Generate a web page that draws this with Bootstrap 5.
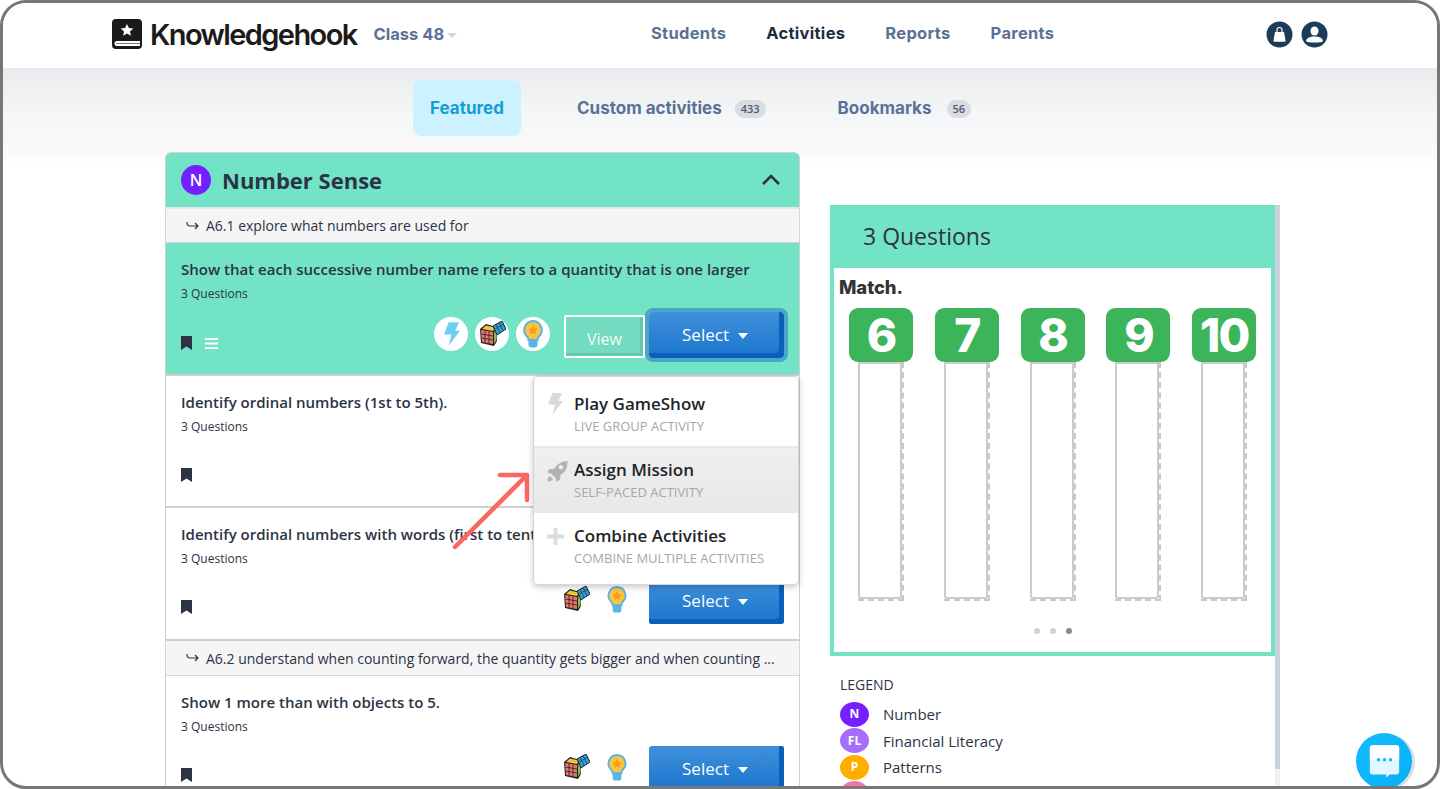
<!DOCTYPE html>
<html lang="en"><head><meta charset="utf-8"><title>Knowledgehook</title>
<link href="https://cdn.jsdelivr.net/npm/bootstrap@5.3.0/dist/css/bootstrap.min.css" rel="stylesheet">
<style>
html,body{height:100%;overflow:hidden;background:#fff}
body{font-family:"Open Sans","Liberation Sans",sans-serif;color:#2c3345}
.frame{height:789px;border:3px solid #777;border-radius:26px;overflow:hidden;position:relative;background:#fff}
.topbar{height:65px;background:#fff;padding:0 109px 3px 108px;position:relative}
.kh-word{font-family:Inter,sans-serif;font-weight:600;font-size:29px;letter-spacing:-1.6px;color:#1c1a1a;margin-left:7px;line-height:1}
.cls{font-family:Inter,sans-serif;font-weight:700;font-size:16.5px;color:#5a7196;margin-left:17px}
.cls-car{border-left:5px solid transparent;border-right:5px solid transparent;border-top:5px solid #c9dbe2;margin-left:3px;margin-top:2px}
.navlinks{position:absolute;left:648px;top:0;height:61px;gap:40px}
.navlinks span{font-family:Inter,sans-serif;font-weight:700;font-size:16.5px;letter-spacing:.3px;color:#5a7196}
.navlinks span.on{color:#1d2d3f}
.tabband{height:84px;background:linear-gradient(#e9ebee,#f5f6f7 55%,#fafafb);position:relative}
.tabs-row{position:absolute;left:410px;top:12px;height:56px}
.tab-on{width:108px;height:56px;background:#cdf2ff;border-radius:8px;color:#129ed9;font-family:Inter,sans-serif;font-weight:700;font-size:17px;padding-top:1px}
.tab-off{font-family:Inter,sans-serif;font-weight:700;font-size:17px;color:#5a7196;padding-top:1px}
.cnt{font-family:"Open Sans",sans-serif;font-weight:600;font-size:11px;background:#d9dce1;color:#4d5a70;border-radius:9px;padding:2px 6px;margin-left:13px;line-height:14px}
.mainrow{padding-left:162px;gap:30px;background:linear-gradient(#fafafb,#fff) no-repeat;background-size:100% 14px}
.leftcol{width:635px;flex:none}
.rightcol{width:450px;flex:none;margin-top:53px;border-right:5px solid #c9d1dd;border-image:linear-gradient(#c9d1dd 563px,#f0f0f0 563px) 1;height:600px}
.subj{height:57px;background:#73e3c6;border:1px solid #d2d2d2;border-bottom:2px solid #e6e6e6;border-radius:6px 6px 0 0;padding:0 15px}
.circ{width:30px;height:30px;border-radius:50%;background:#7420ff;color:#fff;font-weight:600;font-size:16px}
.subj-t{font-size:22px;font-weight:700;color:#2c3345;margin-left:11px;line-height:1}
.std{height:34px;background:#f5f5f5;border:solid #d6d6d6;border-width:0 1px 1px;padding-left:20px;font-size:14px;color:#2c3345;white-space:nowrap}
.std.s2{height:35px}
.std svg{margin-right:7px}
.rowitem{height:133px;border:solid #cfcfcf;border-width:0 1px 2px;background:#fff;padding:15px 15px 0;position:relative}
.rowitem.r2{height:132px}
.rowitem.act{background:#73e3c6}
.it-t{font-size:15px;font-weight:600;line-height:22px;color:#2c3345;white-space:nowrap;overflow:hidden}
.it-q{font-size:12px;line-height:16px;margin-top:6px;color:#2c3345}
.bm{position:absolute;left:15px;bottom:25px}
.act .bm,.r2 .bm{bottom:24px}
.ham{position:absolute;left:39px;bottom:25px}
.rowacts{position:absolute;right:15px;bottom:15px}
.sel{width:135px;height:46px;border:0;border-radius:3px;background:linear-gradient(#3f90db,#1a75cc);box-shadow:inset -5px -5px 0 #0a5fb8;color:#fff;font-size:17px;padding:0 3px 1px 0}
.sel-car{display:inline-block;border-left:5.5px solid transparent;border-right:5.5px solid transparent;border-top:6px solid #fff;margin-left:9px;vertical-align:2px}
.sel.foc{outline:4px solid #4aa6c9;outline-offset:0;border-radius:4px;margin-left:4px;margin-bottom:1px}
.btnview{width:81px;height:43px;border:2px solid #fff;border-radius:2px;background:#74dcc0;box-shadow:inset -3px -3px 0 #63c9ab;color:#fff;font-size:16px;padding:4px 0 0 0;text-shadow:0 0 1px #5c9;margin-bottom:1px}
.wc{width:34px;height:34px;border-radius:50%;background:#fff}
.icons-a{gap:7px;margin-right:14px;margin-bottom:8px}
.icons-b{gap:17px;margin-right:22px;margin-bottom:11px}
.menu{position:absolute;left:530px;top:373px;width:266px;height:209px;background:#fff;border:1px solid #d5d5d5;border-radius:5px;box-shadow:0 2px 6px rgba(0,0,0,.22);z-index:5;overflow:hidden}
.mi{height:66px;padding:13px 0 0 40px;position:relative;border-bottom:2px solid #e8e8e8}
.mi.m1{height:71px;padding-top:17px}
.mi.hov{height:65px;padding-top:12px;background:linear-gradient(#efefef,#e8e8e8)}
.mi:last-child{border-bottom:0}
.mi-t{font-size:17px;font-weight:600;color:#212529;line-height:20px}
.mi-s{font-size:13px;color:#a6a6a6;line-height:14px;margin-top:5px;white-space:nowrap}
.mi svg{position:absolute;left:13px;top:13px}
.mi.m1 svg{top:16px}
.arrow{position:absolute;left:447px;top:466px;z-index:6}
.qhead{height:63px;background:#73e3c6;font-size:23px;color:#2c3345;padding-left:33px}
.qbody{border:solid #73e3c6;border-width:0 4px 4px 4px;height:388px;background:#fff;padding:7px 0 0 0}
.match{font-family:Inter,sans-serif;font-weight:800;font-size:18.500px;color:#333;line-height:24px;margin-left:5px;letter-spacing:-.1px}
.cols{display:flex;gap:21.800px;margin:9px 0 0 15px}
.ccol{width:64px}
.numb{height:54px;background:#3cb55a;border-radius:9px;color:#fff;font-family:Inter,sans-serif;font-weight:800;font-size:46px;line-height:54px;text-align:center;letter-spacing:-2px}
.drop{width:46px;height:239px;margin:0 auto;border-right:2px dashed #c8c8c8;border-bottom:2px dashed #c8c8c8}
.drop div{height:100%;border:2px solid #cbcbcb;border-radius:0 0 3px 3px;background:#fff}
.dots{gap:10px;margin-top:27px}
.dots i{width:6px;height:6px;border-radius:50%;background:#d2d2d2;display:block}
.dots i.cur{background:#7d9089}
.legend{padding:19px 0 0 10px}
.lg-h{font-size:14px;line-height:20px;color:#2c3345;margin-bottom:6px}
.lg-r{height:26.500px;font-size:15px;color:#2c3345}
.lg-c{width:29px;height:25px;border-radius:50%;color:#fff;font-weight:700;font-size:12px;margin-right:14px;flex:none}
.chat{position:absolute;left:1353px;top:730px;width:56px;height:56px;border-radius:50%;background:linear-gradient(135deg,#17bcff,#08aef5);box-shadow:3px 1px 0 #ddd;z-index:7}
</style></head>
<body>
<div class="frame">
  <header class="topbar d-flex align-items-center">
    <svg width="32" height="32" viewBox="0 0 32 32"><rect x="1" y="1" width="30" height="30" rx="4" fill="#1c1a1a"/><path d="M16 6l1.900 4 4.400.5-3.300 3 .9 4.300-3.900-2.200-3.900 2.200.9-4.300-3.300-3 4.400-.5z" fill="#fff"/><path d="M29 23H6a2.500 2.500 0 0 0 0 5h23" fill="#fff"/><path d="M5 25.500H29" stroke="#777"/></svg>
    <span class="kh-word">Knowledgehook</span>
    <span class="cls">Class 48</span><span class="cls-car"></span>
    <nav class="navlinks d-flex align-items-center"><span>Students</span><span class="on">Activities</span><span>Reports</span><span>Parents</span></nav>
    <div class="d-flex ms-auto gap-2">
      <svg width="27" height="27" viewBox="0 0 27 27"><circle cx="13.500" cy="13.500" r="13" fill="#1d3c58"/><path d="M9 11h9l1.500 8.500a1 1 0 0 1-1 1.200h-10a1 1 0 0 1-1-1.200z" fill="#fff"/><path d="M11 11V9a2.500 2.500 0 0 1 5 0v2" fill="none" stroke="#fff" stroke-width="1.200"/></svg>
      <svg width="27" height="27" viewBox="0 0 27 27"><circle cx="13.500" cy="13.500" r="13" fill="#1d3c58"/><ellipse cx="13.500" cy="10" rx="4" ry="4.500" fill="#fff"/><path d="M5 20c1-3.500 4-4.500 8.500-4.500S21 16.500 22 20c-1 1.300-3 1.500-8.500 1.500S6 21.300 5 20z" fill="#fff"/></svg>
    </div>
  </header>
  <div class="tabband">
    <div class="tabs-row d-flex align-items-center">
      <div class="tab-on d-flex align-items-center justify-content-center">Featured</div>
      <div class="tab-off d-flex align-items-center" style="margin-left:56px">Custom activities<span class="cnt">433</span></div>
      <div class="tab-off d-flex align-items-center" style="margin-left:72px">Bookmarks<span class="cnt" style="margin-left:15px">56</span></div>
    </div>
  </div>
  <main class="mainrow d-flex">
    <section class="leftcol">
      <div class="subj d-flex align-items-center">
        <span class="circ d-flex align-items-center justify-content-center">N</span><span class="subj-t">Number Sense</span>
        <svg class="ms-auto" width="20" height="12" viewBox="0 0 20 12" style="margin-right:3px"><path d="M2 10l8-8 8 8" fill="none" stroke="#2c3345" stroke-width="2.600"/></svg>
      </div>
      <div class="std d-flex align-items-center"><svg width="13" height="10" viewBox="0 0 13 10"><path d="M1 1c0 3 1 4 3 4h8M9 2l3 3-3 3" fill="none" stroke="#2c3345" stroke-width="1.200"/></svg>A6.1 explore what numbers are used for</div>
      <div class="rowitem act">
        <div class="it-t">Show that each successive number name refers to a quantity that is one larger</div>
        <div class="it-q">3 Questions</div>
        <svg class="bm" width="11" height="14" viewBox="0 0 11 14"><path d="M0 0h11v14L5.500 10.500 0 14z" fill="#2c3345"/></svg>
        <svg class="ham" width="13" height="11" viewBox="0 0 13 11"><path d="M0 1h13M0 5.500h13M0 10h13" stroke="#fff" stroke-width="1.800"/></svg>
        <div class="rowacts d-flex align-items-end">
          <div class="d-flex icons-a">
            <span class="wc d-flex align-items-center justify-content-center"><svg width="17" height="24" viewBox="0 0 18 25"><path d="M6 0h11l-4 9h5L6 25l3-12H1z" fill="#6dcff4"/></svg></span>
            <span class="wc d-flex align-items-center justify-content-center"><svg width="28" height="26" viewBox="0 0 28 26"><path d="M2 8l6-5 10 3 1 14-3 5-13-3z" fill="#222"/><path d="M3 9l12 2v12L4 21z" fill="#e8776b"/><path d="M7 9.800v12M11 10.400v12M3.400 13l11.600 2M3.700 17l11.300 2" stroke="#222" stroke-width=".8"/><path d="M4 8l4-3.500 9 2-2 3.500z" fill="#f4c53a"/><path d="M16 11l2-3 .5 11-2.500 3.500z" fill="#8cbb49"/><path d="M15 5l9-5 4 8-9 6z" fill="#2d9fd9" stroke="#222"/><path d="M18 3.500l4 8M21 1.500l4 8M17 8l9-5" stroke="#222" stroke-width=".6"/></svg></span>
            <span class="wc d-flex align-items-center justify-content-center"><svg width="20" height="28" viewBox="0 0 20 28"><path d="M10 1a9 9 0 0 0-6 15.500c1.500 1.500 1.500 3 1.500 3.500h9c0-.500 0-2 1.500-3.500A9 9 0 0 0 10 1z" fill="#fbc33f" stroke="#5ab4e6" stroke-width="2"/><path d="M5.500 20h9v4.500a3 3 0 0 1-3 3h-3a3 3 0 0 1-3-3z" fill="#5ab4e6"/><path d="M10 5l1.500 3.500 3.500.3-2.700 2.300.9 3.500-3.200-1.900-3.200 1.900.9-3.500L5 8.800l3.500-.3z" fill="#f39c1f"/></svg></span>
          </div>
          <button class="btnview" type="button">View</button>
          <button class="sel foc" type="button">Select<span class="sel-car"></span></button>
        </div>
      </div>
      <div class="rowitem r2">
        <div class="it-t">Identify ordinal numbers (1st to 5th).</div>
        <div class="it-q">3 Questions</div>
        <svg class="bm" width="11" height="14" viewBox="0 0 11 14"><path d="M0 0h11v14L5.500 10.500 0 14z" fill="#2c3345"/></svg>
      </div>
      <div class="rowitem">
        <div class="it-t">Identify ordinal numbers with words (first to tenth).</div>
        <div class="it-q">3 Questions</div>
        <svg class="bm" width="11" height="14" viewBox="0 0 11 14"><path d="M0 0h11v14L5.500 10.500 0 14z" fill="#2c3345"/></svg>
        <div class="rowacts d-flex align-items-end">
          <div class="d-flex icons-b">
            <svg width="28" height="26" viewBox="0 0 28 26"><path d="M2 8l6-5 10 3 1 14-3 5-13-3z" fill="#222"/><path d="M3 9l12 2v12L4 21z" fill="#e8776b"/><path d="M7 9.800v12M11 10.400v12M3.400 13l11.600 2M3.700 17l11.300 2" stroke="#222" stroke-width=".8"/><path d="M4 8l4-3.500 9 2-2 3.500z" fill="#f4c53a"/><path d="M16 11l2-3 .5 11-2.500 3.500z" fill="#8cbb49"/><path d="M15 5l9-5 4 8-9 6z" fill="#2d9fd9" stroke="#222"/><path d="M18 3.500l4 8M21 1.500l4 8M17 8l9-5" stroke="#222" stroke-width=".6"/></svg>
            <svg width="20" height="27" viewBox="0 0 20 28"><path d="M10 1a9 9 0 0 0-6 15.500c1.500 1.500 1.500 3 1.500 3.500h9c0-.500 0-2 1.500-3.500A9 9 0 0 0 10 1z" fill="#fbc33f" stroke="#5ab4e6" stroke-width="2"/><path d="M5.500 20h9v4.500a3 3 0 0 1-3 3h-3a3 3 0 0 1-3-3z" fill="#5ab4e6"/><path d="M10 5l1.500 3.500 3.500.3-2.700 2.300.9 3.500-3.200-1.900-3.200 1.900.9-3.500L5 8.800l3.500-.3z" fill="#f39c1f"/></svg>
          </div>
          <button class="sel" type="button">Select<span class="sel-car"></span></button>
        </div>
      </div>
      <div class="std s2 d-flex align-items-center"><svg width="13" height="10" viewBox="0 0 13 10"><path d="M1 1c0 3 1 4 3 4h8M9 2l3 3-3 3" fill="none" stroke="#2c3345" stroke-width="1.200"/></svg>A6.2 understand when counting forward, the quantity gets bigger and when counting ...</div>
      <div class="rowitem">
        <div class="it-t">Show 1 more than with objects to 5.</div>
        <div class="it-q">3 Questions</div>
        <svg class="bm" width="11" height="14" viewBox="0 0 11 14"><path d="M0 0h11v14L5.500 10.500 0 14z" fill="#2c3345"/></svg>
        <div class="rowacts d-flex align-items-end">
          <div class="d-flex icons-b">
            <svg width="28" height="26" viewBox="0 0 28 26"><path d="M2 8l6-5 10 3 1 14-3 5-13-3z" fill="#222"/><path d="M3 9l12 2v12L4 21z" fill="#e8776b"/><path d="M7 9.800v12M11 10.400v12M3.400 13l11.600 2M3.700 17l11.300 2" stroke="#222" stroke-width=".8"/><path d="M4 8l4-3.500 9 2-2 3.500z" fill="#f4c53a"/><path d="M16 11l2-3 .5 11-2.500 3.500z" fill="#8cbb49"/><path d="M15 5l9-5 4 8-9 6z" fill="#2d9fd9" stroke="#222"/><path d="M18 3.500l4 8M21 1.500l4 8M17 8l9-5" stroke="#222" stroke-width=".6"/></svg>
            <svg width="20" height="27" viewBox="0 0 20 28"><path d="M10 1a9 9 0 0 0-6 15.500c1.500 1.500 1.500 3 1.500 3.500h9c0-.500 0-2 1.500-3.500A9 9 0 0 0 10 1z" fill="#fbc33f" stroke="#5ab4e6" stroke-width="2"/><path d="M5.500 20h9v4.500a3 3 0 0 1-3 3h-3a3 3 0 0 1-3-3z" fill="#5ab4e6"/><path d="M10 5l1.500 3.500 3.500.3-2.700 2.300.9 3.500-3.200-1.900-3.200 1.900.9-3.500L5 8.800l3.500-.3z" fill="#f39c1f"/></svg>
          </div>
          <button class="sel" type="button">Select<span class="sel-car"></span></button>
        </div>
      </div>
    </section>
    <aside class="rightcol">
      <div class="qhead d-flex align-items-center">3 Questions</div>
      <div class="qbody">
        <div class="match">Match.</div>
        <div class="cols">
          <div class="ccol"><div class="numb">6</div><div class="drop"><div></div></div></div>
          <div class="ccol"><div class="numb">7</div><div class="drop"><div></div></div></div>
          <div class="ccol"><div class="numb">8</div><div class="drop"><div></div></div></div>
          <div class="ccol"><div class="numb">9</div><div class="drop"><div></div></div></div>
          <div class="ccol"><div class="numb">10</div><div class="drop"><div></div></div></div>
        </div>
        <div class="dots d-flex justify-content-center"><i></i><i></i><i class="cur"></i></div>
      </div>
      <div class="legend">
        <div class="lg-h">LEGEND</div>
        <div class="lg-r d-flex align-items-center"><span class="lg-c d-flex align-items-center justify-content-center" style="background:#7420ff">N</span>Number</div>
        <div class="lg-r d-flex align-items-center"><span class="lg-c d-flex align-items-center justify-content-center" style="background:#a56dfb">FL</span>Financial Literacy</div>
        <div class="lg-r d-flex align-items-center"><span class="lg-c d-flex align-items-center justify-content-center" style="background:#ffae00">P</span>Patterns</div>
        <div class="lg-r d-flex align-items-center"><span class="lg-c d-flex align-items-center justify-content-center" style="background:#f274ac"></span></div>
      </div>
    </aside>
  </main>
  <div class="menu">
    <div class="mi m1"><svg width="16" height="22" viewBox="0 0 18 25"><path d="M6 0h11l-4 9h5L6 25l3-12H1z" fill="#d9d9d9"/></svg><div class="mi-t">Play GameShow</div><div class="mi-s">LIVE GROUP ACTIVITY</div></div>
    <div class="mi hov"><svg width="21" height="21" viewBox="0 0 21 21"><path d="M20.500 0c.5 6-2 11-7 14l-.5 4.500L9.500 21l-1-4-4.500-4.500-4-1L2.500 8 7 8c3-5 8-8 13.500-8zM14 4a2.200 2.200 0 1 0 .01 0z" fill="#b3b3b3" fill-rule="evenodd"/><path d="M3 15c-2 1-2.500 4-2.500 5.500 1.500 0 4.500-.5 5.500-2.500z" fill="#b3b3b3"/></svg><div class="mi-t">Assign Mission</div><div class="mi-s">SELF-PACED ACTIVITY</div></div>
    <div class="mi"><svg width="17" height="17" viewBox="0 0 17 17" style="top:15px"><path d="M6.500 0h4v6.500H17v4h-6.500V17h-4v-6.500H0v-4h6.500z" fill="#dcdcdc"/></svg><div class="mi-t">Combine Activities</div><div class="mi-s">COMBINE MULTIPLE ACTIVITIES</div></div>
  </div>
  <svg class="arrow" width="85" height="85" viewBox="0 0 85 85"><path d="M5 78L77 6M50 6h27v25" fill="none" stroke="#fb6663" stroke-width="4.500" stroke-linecap="round" stroke-linejoin="round"/></svg>
  <div class="chat d-flex align-items-center justify-content-center"><svg width="31" height="37" viewBox="0 0 36 40"><path d="M4 1h28a3 3 0 0 1 3 3v28a3 3 0 0 1-3 3h-8l-4 4v-4H4a3 3 0 0 1-3-3V4a3 3 0 0 1 3-3z" fill="#e2f6fd"/><path d="M4 1h28a3 3 0 0 1 3 3v14H1V4a3 3 0 0 1 3-3z" fill="#fff"/><circle cx="11" cy="18" r="2" fill="#15b5fb"/><circle cx="18" cy="18" r="2" fill="#15b5fb"/><circle cx="25" cy="18" r="2" fill="#15b5fb"/></svg></div>
</div>
<script src="https://cdn.jsdelivr.net/npm/bootstrap@5.3.0/dist/js/bootstrap.bundle.min.js"></script>
</body></html>
